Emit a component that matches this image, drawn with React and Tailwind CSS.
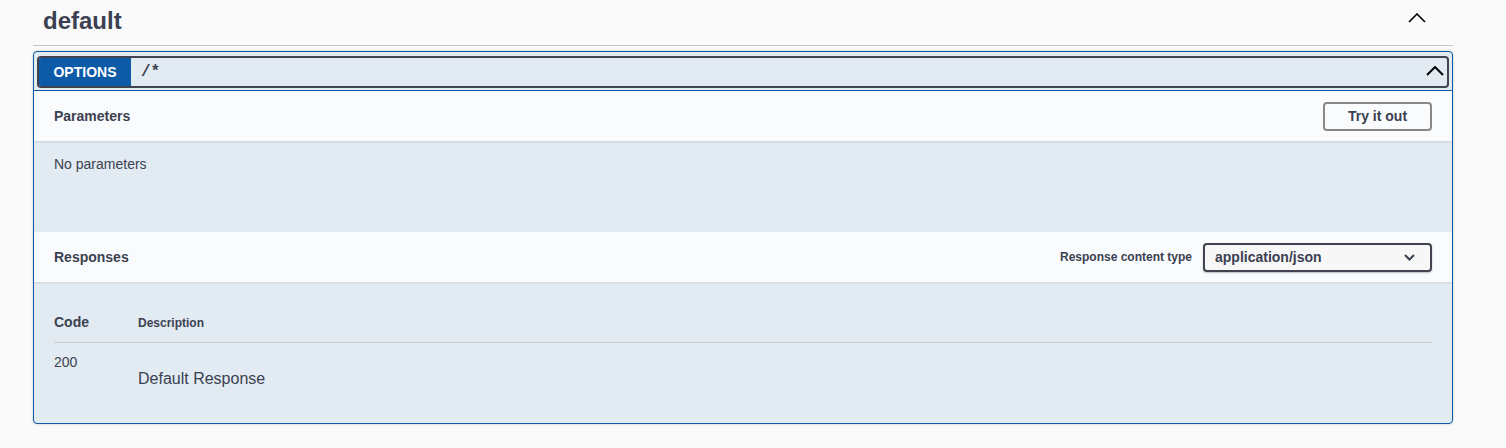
import React from 'react';

const ChevronUp = ({ className, strokeWidth = 2 }) => (
  <svg className={className} viewBox="0 0 18 10" fill="none">
    <path d="M1 9 L9 1 L17 9" stroke="#000" strokeWidth={strokeWidth} />
  </svg>
);

const ChevronDown = () => (
  <svg className="w-[11px] h-[7px]" viewBox="0 0 11 7" fill="none">
    <path d="M1 1 L5.5 5.5 L10 1" stroke="#3b4151" strokeWidth="2" />
  </svg>
);

const SectionHeader = ({ title, children }) => (
  <div className="flex items-center justify-between h-[50px] px-5 bg-[#f9fbfd] shadow-[0_1px_2px_rgba(0,0,0,0.1)] relative">
    <h4 className="text-[14px] font-bold text-[#3b4151]">{title}</h4>
    {children}
  </div>
);

const App = () => {
  return (
    <div className="min-h-[448px] bg-[#fafafa] font-['Liberation_Sans',Arial,sans-serif] text-[#3b4151]">
      <div className="ml-[33px] w-[1420px]">
        {/* tag header */}
        <div className="flex items-center justify-between h-[46px] pl-[10px] pr-[27px] border-b border-[#c4c6cb] mb-[5px]">
          <h3 className="text-[24px] font-bold leading-none pb-[4px]">default</h3>
          <ChevronUp className="w-[18px] h-[10px] mb-[9px]" strokeWidth={1.6} />
        </div>

        {/* operation block */}
        <div className="border border-[#0d5aa7] rounded-[4px] bg-[#e2eaf2] shadow-[0_0_3px_rgba(0,0,0,0.19)]">
          <div className="px-[3px] pt-[4px] pb-[2px] border-b border-[#0d5aa7]">
            <div className="flex items-center h-[32px] border-2 border-[#41444e] rounded-[4px] overflow-hidden">
              <span className="w-[92px] h-full flex items-center justify-center bg-[#0d5aa7] text-white text-[14px] font-bold">
                OPTIONS
              </span>
              <span className="pl-[10px] font-['Liberation_Mono',monospace] text-[16px] font-semibold">/*</span>
              <div className="flex-1" />
              <ChevronUp className="w-[18px] h-[10px] mr-[3px] mb-[2px]" />
            </div>
          </div>

          <SectionHeader title="Parameters">
            <button className="w-[109px] h-[29px] border-2 border-[#888] rounded-[4px] text-[14px] font-bold text-[#3b4151] bg-transparent">
              Try it out
            </button>
          </SectionHeader>
          <div className="h-[91px] px-5 pt-[13px]">
            <p className="text-[14px]">No parameters</p>
          </div>

          <SectionHeader title="Responses">
            <div className="flex items-center gap-[11px]">
              <span className="text-[12px] font-bold">Response content type</span>
              <div className="flex items-center justify-between w-[229px] h-[29px] pl-[10px] pr-[15px] border-2 border-[#41444e] rounded-[4px] bg-[#f7f7f7] shadow-[0_1px_2px_rgba(0,0,0,0.25)]">
                <span className="text-[14px] font-bold">application/json</span>
                <ChevronDown />
              </div>
            </div>
          </SectionHeader>

          <div className="px-5 pt-[21px] pb-[32px]">
            <div className="flex items-center h-[40px] border-b border-[#c8cbd1]">
              <span className="w-[84px] text-[14px] font-bold">Code</span>
              <span className="text-[12px] font-bold">Description</span>
            </div>
            <div className="flex">
              <span className="w-[84px] pt-[9px] text-[14px]">200</span>
              <span className="pt-[24px] text-[16px]">Default Response</span>
            </div>
          </div>
        </div>
      </div>
    </div>
  );
};

export default App;
